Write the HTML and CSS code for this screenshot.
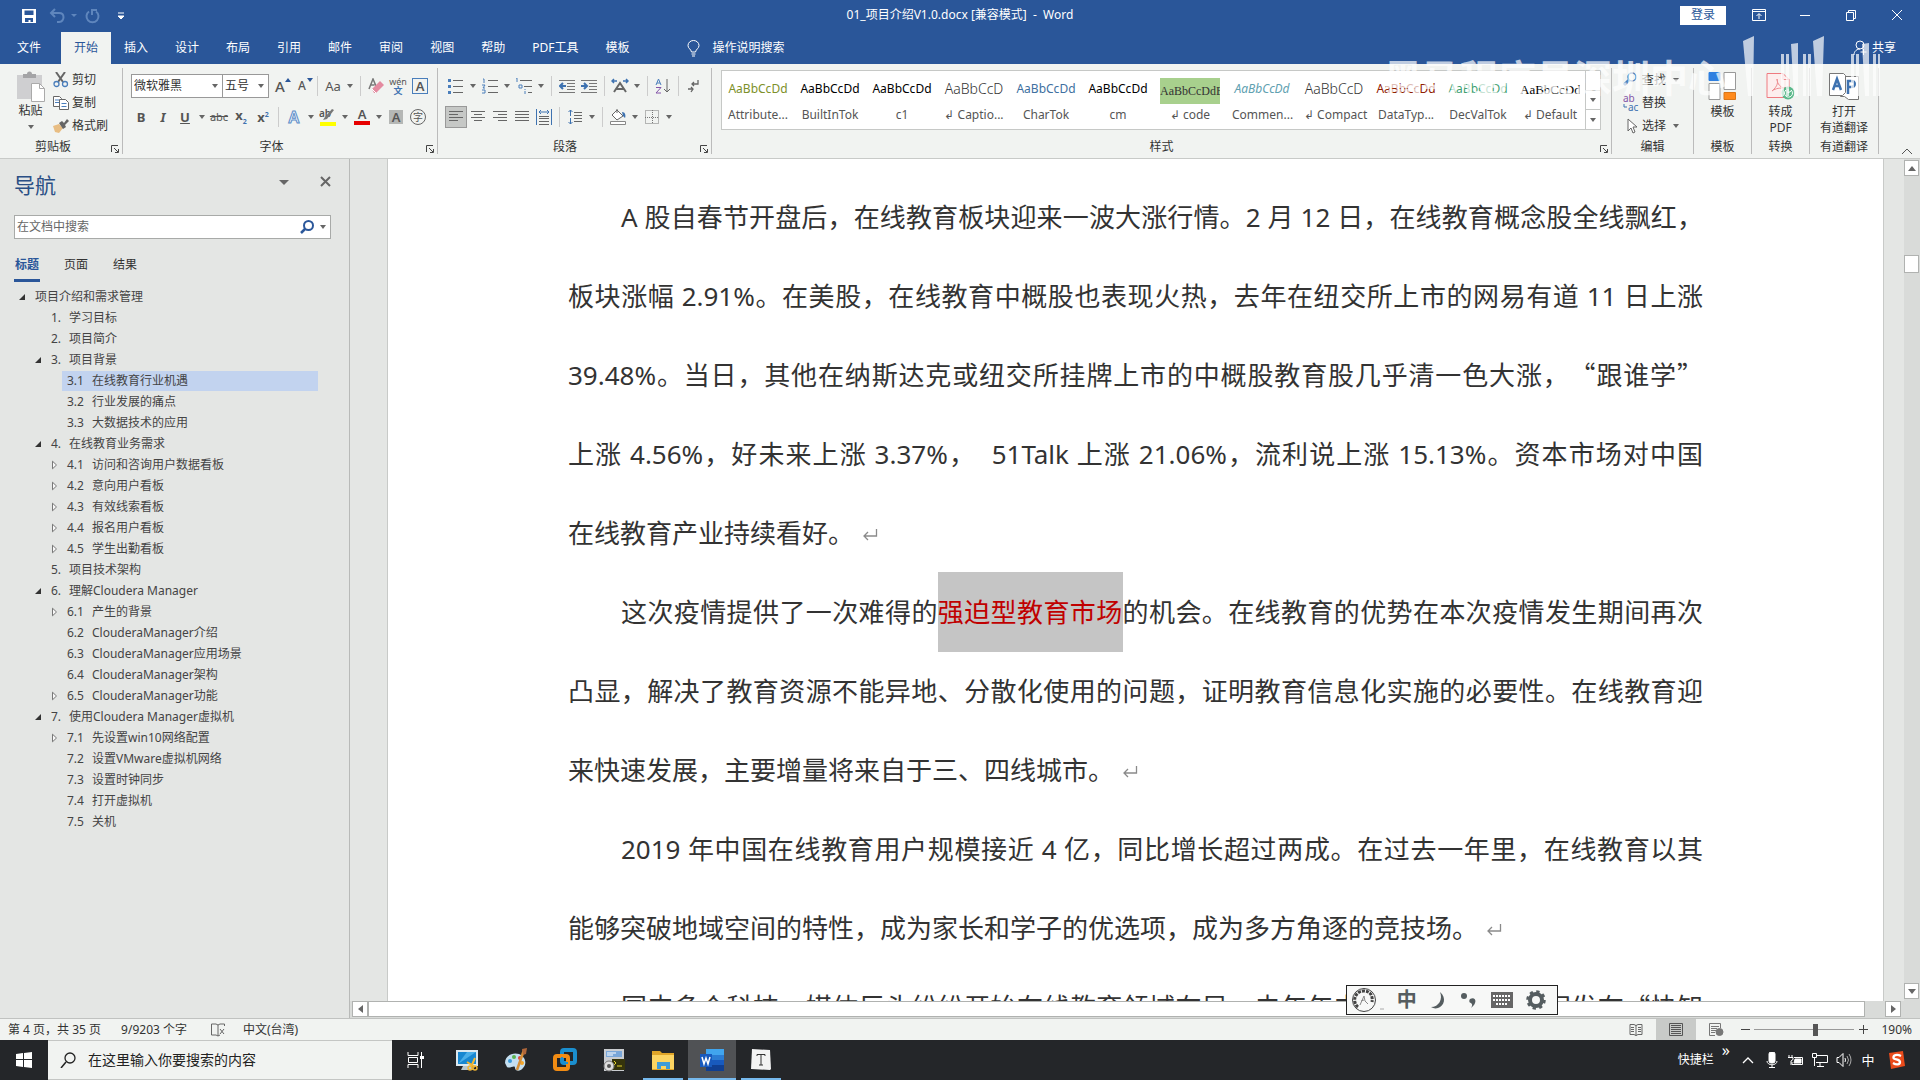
FILE: index.html
```html
<!DOCTYPE html>
<html lang="zh-CN">
<head>
<meta charset="utf-8">
<meta name="viewport" content="width=device-width, initial-scale=1">
<title>01_项目介绍V1.0.docx [兼容模式] - Word</title>
<link rel="stylesheet" href="styles.css">
</head>
<body>
<svg class="defs" aria-hidden="true">
  <symbol id="open" viewBox="0 0 8 8"><path d="M7 1v6H1z" fill="#333"/></symbol>
  <symbol id="closed" viewBox="0 0 8 10"><path d="M1.5 1.2 5.5 5l-4 3.8z" fill="#f8f8f8" stroke="#777"/></symbol>
  <symbol id="launch" viewBox="0 0 9 9"><path d="M.5 7V.5H7M3 3l4 4M7.500 4v3.500H4" fill="none" stroke="#444"/></symbol>
  <symbol id="enter" viewBox="0 0 16 16"><path d="M14.500 2v7H2M6 5 2 9l4 4" fill="none" stroke="#8a8a8a" stroke-width="1.300"/></symbol>
</svg>

<header class="titlebar">
  <div class="quick">
    <button aria-label="保存"><svg width="16" height="16" viewBox="0 0 16 16"><path d="M1 1h14v14H1z" fill="#fff"/><path d="M3.500 2.500h9v4.500h-9zM4 10h8v4H9.500v-2h-2v2H4z" fill="#2a5699"/></svg></button>
    <button class="undo" aria-label="撤消"><svg width="28" height="16" viewBox="0 0 28 16" fill="none" stroke="#5f86bd" stroke-width="2"><path d="M6 1 2 5l4 4M2 5h8c6 0 6 8 0 9H8"/><path d="M22 6h6l-3 3z" fill="#5f86bd" stroke="none"/></svg></button>
    <button aria-label="恢复"><svg width="16" height="16" viewBox="0 0 16 16" fill="none" stroke="#5f86bd" stroke-width="2"><path d="M4 3.500a6 6 0 1 0 7 0M7 7V2h5"/></svg></button>
    <button class="more" aria-label="自定义快速访问工具栏"><svg width="8" height="8" viewBox="0 0 8 8"><path d="M1 1h6M1 4h6L4 7z" stroke="#fff" fill="#fff"/></svg></button>
  </div>
  <h1>01_项目介绍V1.0.docx [兼容模式]&nbsp; -&nbsp; Word</h1>
  <div class="window">
    <button class="login">登录</button>
    <button aria-label="功能区显示选项"><svg width="14" height="12" viewBox="0 0 14 12" fill="none" stroke="#fff"><path d="M.5.5h13v11H.5zM.5 2.500h13M7 10V5M4.500 7 7 4.500 9.500 7"/></svg></button>
    <button aria-label="最小化"><svg width="12" height="12" viewBox="0 0 12 12"><path d="M1 6.500h10" stroke="#fff"/></svg></button>
    <button aria-label="还原"><svg width="12" height="12" viewBox="0 0 12 12" fill="none" stroke="#fff"><path d="M1.500 3.500h7v8h-7zM3.500 3V1.500h7v8H9"/></svg></button>
    <button aria-label="关闭"><svg width="12" height="12" viewBox="0 0 12 12"><path d="m1 1 10 10M11 1 1 11" stroke="#fff"/></svg></button>
  </div>
</header>

<nav class="tabs" aria-label="功能区">
  <button class="file">文件</button><button class="active">开始</button><button>插入</button><button>设计</button><button>布局</button><button>引用</button><button>邮件</button><button>审阅</button><button>视图</button><button>帮助</button><button>PDF工具</button><button>模板</button>
  <button class="tell"><svg width="13" height="17" viewBox="0 0 13 17" fill="none" stroke="#fff"><path d="M4.500 12C4 9 1 8.500 1 5.500a5.500 5 0 0 1 11 0C12 8.500 9 9 8.500 12zM4.500 14h4M5 16h3"/></svg>操作说明搜索</button>
  <button class="share"><svg width="14" height="16" viewBox="0 0 14 16" fill="none" stroke="#fff"><circle cx="7" cy="5" r="4"/><path d="M1 15c0-4 3-6 6-6M10.500 9v6M7.500 12h6"/></svg>共享</button>
</nav>

<section class="ribbon" aria-label="开始">
  <div class="group clip">
    <div class="body">
      <button class="paste"><svg width="29" height="31" viewBox="0 0 29 31"><path d="M1 4h25v24H1z" fill="#cfcfd1"/><path d="M7 7V3h4a2.500 2.500 0 0 1 5 0h4v4z" fill="#a4a4a6"/><path d="M15.500 12.500h8l5 5v13h-13z" fill="#fff" stroke="#aaa"/><path d="M23.500 12.500v5h5" fill="none" stroke="#aaa"/></svg>粘贴<i class="dd"></i></button>
      <div class="stack">
        <button><svg width="16" height="16" viewBox="0 0 16 16" fill="none"><path d="m3 0 7 10M12 0 5 10" stroke="#666" stroke-width="2"/><circle cx="3.500" cy="12" r="2.500" stroke="#4a7ebb" stroke-width="1.300"/><circle cx="12" cy="12" r="2.500" stroke="#4a7ebb" stroke-width="1.300"/></svg>剪切</button>
        <button><svg width="16" height="16" viewBox="0 0 16 16" fill="#fff" stroke="#666"><path d="M.5 1.500h6l2 2v8h-8z"/><path d="M6.500 4.500h6l3 3v7h-9z"/><path d="M2 5h4M2 7.500h4M8.500 8.500h5M8.500 11.500h5" stroke="#4a7ebb"/></svg>复制</button>
        <button><svg width="16" height="16" viewBox="0 0 16 16"><path d="m0 8 6-2 4 4-4 5-4-1z" fill="#e8bd83"/><path d="m6 5 3-2 2 2 3-4 2 2-4 4 1 2-3 2z" fill="#666"/></svg>格式刷</button>
      </div>
    </div>
    <h2>剪贴板</h2><svg class="launch"><use href="#launch"/></svg>
  </div>

  <div class="group font">
    <div class="rows">
      <div class="row">
        <label class="combo wide"><input aria-label="字体" value="微软雅黑"><i class="dd"></i></label><label class="combo"><input aria-label="字号" value="五号"><i class="dd"></i></label>
        <button class="ib" aria-label="增大字号"><span class="big">A</span><svg class="tip" width="6" height="4"><path d="m0 4 3-4 3 4z" fill="#2b579a"/></svg></button>
        <button class="ib" aria-label="减小字号"><span class="mid">A</span><svg class="tip" width="6" height="4"><path d="m0 0 3 4 3-4z" fill="#2b579a"/></svg></button>
        <s></s><button class="ib"><span class="aa">Aa</span><i class="dd"></i></button><s></s>
        <button class="ib" aria-label="清除格式"><svg width="16" height="16" viewBox="0 0 16 16"><path d="m1 11 4-10 3 7M2.500 7h4" stroke="#777" stroke-width="1.500" fill="none"/><path d="m4 11 8-8 4 4-8 8H6z" fill="#e48aa0"/><path d="m4 11 4 4" stroke="#fff"/></svg></button>
        <button class="ib wen" aria-label="拼音指南"><span>wén</span><b>文</b></button>
        <button class="ib" aria-label="字符边框"><span class="boxed">A</span></button>
      </div>
      <div class="row">
        <button class="ib"><b>B</b></button><button class="ib"><b><em>I</em></b></button><button class="ib"><b><u>U</u></b><i class="dd"></i></button><button class="ib"><del>abc</del></button><button class="ib"><b>x<sub>2</sub></b></button><button class="ib"><b>x<sup>2</sup></b></button><s></s>
        <button class="ib"><span class="glow">A</span><i class="dd"></i></button>
        <button class="ib" aria-label="突出显示"><svg width="18" height="18" viewBox="0 0 18 18"><path d="M1 14h16v4H1z" fill="#ff0"/><text x="0" y="9" font-size="10" fill="#555">ab</text><path d="m15 2-7 9-4 1 2-3 7-8z" fill="#777"/></svg><i class="dd"></i></button>
        <button class="ib"><span class="red">A</span><i class="dd"></i></button><button class="ib"><span class="shade">A</span></button><button class="ib"><span class="ring">字</span></button>
      </div>
    </div>
    <h2>字体</h2><svg class="launch"><use href="#launch"/></svg>
  </div>

  <div class="group para">
    <div class="rows">
      <div class="row">
        <button class="ib" aria-label="项目符号"><svg width="16" height="16"><path d="M5 2.500h10M5 8.500h10M5 14.500h10" stroke="#666"/><path d="M0 1h3v3H0zM0 7h3v3H0zM0 13h3v3H0z" fill="#4a7ebb"/></svg><i class="dd"></i></button>
        <button class="ib" aria-label="编号"><svg width="16" height="16"><path d="M6 2.500h10M6 8.500h10M6 14.500h10" stroke="#666"/><path d="M1 1h1v4M0 7h3l-2 3h2M0 12h3v3H0" stroke="#4a7ebb" fill="none"/></svg><i class="dd"></i></button>
        <button class="ib" aria-label="多级列表"><svg width="18" height="16"><path d="M5 2.500h12M9 8.500h8M13 14.500h4" stroke="#666"/><path d="M1 0h1v4M4 7h3v3H4zM10 11v1M10 13v3" stroke="#4a7ebb" fill="none"/></svg><i class="dd"></i></button><s></s>
        <button class="ib" aria-label="减少缩进"><svg width="16" height="14" fill="none"><path d="M0 1.500h16M8 4.500h8M8 7.500h8M8 10.500h8M0 13.500h16" stroke="#777"/><path d="M7 7H1M4 4 1 7l3 3" stroke="#3e72b0" stroke-width="2"/></svg></button>
        <button class="ib" aria-label="增加缩进"><svg width="16" height="14" fill="none"><path d="M0 1.500h16M8 4.500h8M8 7.500h8M8 10.500h8M0 13.500h16" stroke="#777"/><path d="M0 7h6M3 4l3 3-3 3" stroke="#3e72b0" stroke-width="2"/></svg></button><s></s>
        <button class="ib" aria-label="中文版式"><svg width="18" height="16" fill="none"><path d="m3 14 6-9 6 9M5 11h8" stroke="#666" stroke-width="2"/><path d="M1 3h5M3 1 1 3l2 2M12 3h5M15 1l2 2-2 2" stroke="#3e72b0" stroke-width="1.500"/></svg><i class="dd"></i></button><s></s>
        <button class="ib" aria-label="排序"><svg width="16" height="16" fill="none"><path d="m1 7 2.500-6L6 7M2 5h3" stroke="#4a7ebb"/><path d="M1 9.500h5L1 15h5" stroke="#8355a8"/><path d="M12 1v13M9 11l3 3 3-3" stroke="#666"/></svg></button><s></s>
        <button class="ib" aria-label="显示编辑标记"><svg width="14" height="14" fill="none" stroke="#666" stroke-width="1.300"><path d="M11 1v4H5M7 3 5 5l2 2M1 10h5M4 8l2 2-2 3"/></svg></button>
      </div>
      <div class="row">
        <button class="ib on" aria-label="左对齐"><svg width="14" height="14"><path d="M0 1.500h14M0 4.500h9M0 7.500h14M0 10.500h9" stroke="#666"/></svg></button>
        <button class="ib" aria-label="居中"><svg width="14" height="14"><path d="M0 1.500h14M3 4.500h8M0 7.500h14M3 10.500h8" stroke="#666"/></svg></button>
        <button class="ib" aria-label="右对齐"><svg width="14" height="14"><path d="M0 1.500h14M5 4.500h9M0 7.500h14M5 10.500h9" stroke="#666"/></svg></button>
        <button class="ib" aria-label="两端对齐"><svg width="14" height="14"><path d="M0 1.500h14M0 4.500h14M0 7.500h14M0 10.500h14" stroke="#666"/></svg></button>
        <button class="ib" aria-label="分散对齐"><svg width="16" height="16" fill="none"><path d="M.5 0v16M15.500 0v16M3 3h10M5 1 3 3l2 2M11 1l2 2-2 2" stroke="#3e72b0"/><path d="M3 7.500h10M3 9.500h10M3 12.500h10M3 15.500h10" stroke="#666"/></svg></button><s></s>
        <button class="ib" aria-label="行距"><svg width="14" height="16" fill="none"><path d="M6 3.500h8M6 6.500h8M6 9.500h8M6 12.500h8" stroke="#666"/><path d="M2.500 1v6M.5 3l2-2 2 2M2.500 9v6M.5 13l2 2 2-2" stroke="#3e72b0"/></svg><i class="dd"></i></button><s></s>
        <button class="ib" aria-label="底纹"><svg width="17" height="17" fill="none"><path d="M.5 13.500h15v3H.5z" fill="#fff" stroke="#888"/><path d="m7 2 6 6-6 4-5-5zM7 5V1" fill="#fff" stroke="#666"/><path d="M12 4c3 0 4 3 3 6l-2-2z" fill="#3e72b0"/></svg><i class="dd"></i></button>
        <button class="ib" aria-label="边框"><svg width="14" height="14" fill="none" stroke="#777" stroke-dasharray="1 1"><path d="M.5.5h13v13H.5zM7.500 0v14M0 7.500h14"/></svg><i class="dd"></i></button>
      </div>
    </div>
    <h2>段落</h2><svg class="launch"><use href="#launch"/></svg>
  </div>

  <div class="group styles">
    <div class="gallery">
      <div class="cells">
        <button><span class="olive">AaBbCcDd</span>Attribute...</button>
        <button><span>AaBbCcDd</span>BuiltInTok</button>
        <button><span>AaBbCcDd</span>c1</button>
        <button><span class="lite">AaBbCcD</span>↲ Captio...</button>
        <button><span class="blue">AaBbCcDd</span>CharTok</button>
        <button><span>AaBbCcDd</span>cm</button>
        <button><span class="code">AaBbCcDdE</span>↲ code</button>
        <button><span class="comm">AaBbCcDd</span>Commen...</button>
        <button><span class="lite">AaBbCcD</span>↲ Compact</button>
        <button><span class="brown">AaBbCcDd</span>DataTyp...</button>
        <button><span class="green">AaBbCcDd</span>DecValTok</button>
        <button><span class="serif">AaBbCcDd</span>↲ Default</button>
      </div>
      <div class="spin"><button aria-label="上一行"></button><button aria-label="下一行"><i class="dd"></i></button><button class="all" aria-label="其他"><i class="dd"></i></button></div>
    </div>
    <h2>样式</h2><svg class="launch"><use href="#launch"/></svg>
  </div>

  <div class="group edit">
    <div class="stack">
      <button><svg width="16" height="16" fill="none" stroke="#4a7ebb"><circle cx="9" cy="5" r="4" stroke-width="1.500"/><path d="m6 8-5 5" stroke-width="3"/></svg>查找<i class="dd"></i></button>
      <button><svg width="16" height="18"><text x="0" y="8" font-size="10" fill="#8355a8">ab</text><text x="5" y="17" font-size="10" fill="#3e72b0">ac</text><path d="M1 10v3h3" stroke="#3e72b0" fill="none"/></svg>替换</button>
      <button><svg width="16" height="16"><path d="M5 1v12l3-3 2 5 2-1-2-5h4z" fill="#fff" stroke="#666"/></svg>选择<i class="dd"></i></button>
    </div>
    <h2>编辑</h2>
  </div>
  <div class="group tool">
    <button><svg width="29" height="29" fill="#fff" stroke="#999"><path d="M1 .5h11v8H1z" fill="#2f7fe0" stroke="#2f7fe0"/><path d="M16 .5h11.500v17H16zM1 11.500h11v16H1z"/><path d="M16 20.500h11.500v7H16z" fill="#ff8a1c" stroke="#d97618"/></svg>模板</button>
    <h2>模板</h2>
  </div>
  <div class="group tool">
    <button><svg width="29" height="29" fill="none"><path d="M1 1.500h16l6 6v18H1z" fill="#fdeeee" stroke="#ef7a80"/><path d="M17 1.500v6h6M6 19c6-5 6-9 5-12 0 5 4 9 8 9-5 0-9 0-13 3z" stroke="#ee8c90"/><circle cx="22" cy="21" r="6.500" fill="#5bb98b"/><path d="M25 18a4 4 0 1 1-5 0M22 17v4l3-2" stroke="#fff"/></svg>转成<br>PDF</button>
    <h2>转换</h2>
  </div>
  <div class="group tool last">
    <button><svg width="30" height="29" fill="#fff" stroke="#777"><path d="M11.500 4.500h18v23h-10l-4-3h-4z"/><path d="M.5 1.500h14l2 2v17l-3 3H.5z"/><path d="m4 18 4-11 4 11M5.500 14h5M19 22V9h3c5 0 5 6 0 6h-3" fill="none" stroke="#3e72b0" stroke-width="2.500"/></svg>打开<br>有道翻译</button>
    <h2>有道翻译</h2>
  </div>
  <button class="collapse" aria-label="折叠功能区"><svg width="12" height="8"><path d="m1 7 5-5 5 5" stroke="#555" fill="none"/></svg></button>
</section>

<main class="work">
  <aside class="navpane">
    <div class="navhead"><h2>导航</h2><i class="dd"></i><button aria-label="关闭"><svg width="11" height="11"><path d="m1 1 9 9M10 1l-9 9" stroke="#666" stroke-width="2"/></svg></button></div>
    <label class="find"><input type="text" placeholder="在文档中搜索" aria-label="在文档中搜索"><svg width="14" height="14" fill="none" stroke="#2b579a"><circle cx="8.500" cy="5.500" r="4.500" stroke-width="2"/><path d="m5 9-4 4" stroke-width="2.500"/></svg><i class="dd"></i></label>
    <div class="navtabs"><button class="active">标题</button><button>页面</button><button>结果</button></div>
    <ul class="tree">
      <li class="l0"><svg><use href="#open"/></svg><a href="#">项目介绍和需求管理</a></li>
      <li class="l1"><svg></svg><a href="#"><b>1.</b>学习目标</a></li>
      <li class="l1"><svg></svg><a href="#"><b>2.</b>项目简介</a></li>
      <li class="l1"><svg><use href="#open"/></svg><a href="#"><b>3.</b>项目背景</a></li>
      <li class="l2"><svg></svg><a class="current" href="#"><b>3.1</b>在线教育行业机遇</a></li>
      <li class="l2"><svg></svg><a href="#"><b>3.2</b>行业发展的痛点</a></li>
      <li class="l2"><svg></svg><a href="#"><b>3.3</b>大数据技术的应用</a></li>
      <li class="l1"><svg><use href="#open"/></svg><a href="#"><b>4.</b>在线教育业务需求</a></li>
      <li class="l2"><svg><use href="#closed"/></svg><a href="#"><b>4.1</b>访问和咨询用户数据看板</a></li>
      <li class="l2"><svg><use href="#closed"/></svg><a href="#"><b>4.2</b>意向用户看板</a></li>
      <li class="l2"><svg><use href="#closed"/></svg><a href="#"><b>4.3</b>有效线索看板</a></li>
      <li class="l2"><svg><use href="#closed"/></svg><a href="#"><b>4.4</b>报名用户看板</a></li>
      <li class="l2"><svg><use href="#closed"/></svg><a href="#"><b>4.5</b>学生出勤看板</a></li>
      <li class="l1"><svg></svg><a href="#"><b>5.</b>项目技术架构</a></li>
      <li class="l1"><svg><use href="#open"/></svg><a href="#"><b>6.</b>理解Cloudera Manager</a></li>
      <li class="l2"><svg><use href="#closed"/></svg><a href="#"><b>6.1</b>产生的背景</a></li>
      <li class="l2"><svg></svg><a href="#"><b>6.2</b>ClouderaManager介绍</a></li>
      <li class="l2"><svg></svg><a href="#"><b>6.3</b>ClouderaManager应用场景</a></li>
      <li class="l2"><svg></svg><a href="#"><b>6.4</b>ClouderaManager架构</a></li>
      <li class="l2"><svg><use href="#closed"/></svg><a href="#"><b>6.5</b>ClouderaManager功能</a></li>
      <li class="l1"><svg><use href="#open"/></svg><a href="#"><b>7.</b>使用Cloudera Manager虚拟机</a></li>
      <li class="l2"><svg><use href="#closed"/></svg><a href="#"><b>7.1</b>先设置win10网络配置</a></li>
      <li class="l2"><svg></svg><a href="#"><b>7.2</b>设置VMware虚拟机网络</a></li>
      <li class="l2"><svg></svg><a href="#"><b>7.3</b>设置时钟同步</a></li>
      <li class="l2"><svg></svg><a href="#"><b>7.4</b>打开虚拟机</a></li>
      <li class="l2"><svg></svg><a href="#"><b>7.5</b>关机</a></li>
    </ul>
  </aside>

  <div class="canvas">
    <div class="upper">
      <article class="page">
        <div class="flow">
          <p><span class="end">期，情绪影响。</span></p>
          <p><span class="in">A 股自春节开盘后，在线教育板块迎来一波大涨行情。2 月 12 日，在线教育概念股全线飘红，</span><span>板块涨幅 2.91%。在美股，在线教育中概股也表现火热，去年在纽交所上市的网易有道 11 日上涨</span><span>39.48%。当日，其他在纳斯达克或纽交所挂牌上市的中概股教育股几乎清一色大涨，<q>“</q>跟谁学<q>”</q></span><span>上涨 4.56%，好未来上涨 3.37%，&nbsp; 51Talk 上涨 21.06%，流利说上涨 15.13%。资本市场对中国</span><span class="end">在线教育产业持续看好。<svg class="ret"><use href="#enter"/></svg></span></p>
          <p><span class="in">这次疫情提供了一次难得的<mark>强迫型教育市场</mark>的机会。在线教育的优势在本次疫情发生期间再次</span><span>凸显，解决了教育资源不能异地、分散化使用的问题，证明教育信息化实施的必要性。在线教育迎</span><span class="end">来快速发展，主要增量将来自于三、四线城市。<svg class="ret"><use href="#enter"/></svg></span></p>
          <p><span class="in">2019 年中国在线教育用户规模接近 4 亿，同比增长超过两成。在过去一年里，在线教育以其</span><span class="end">能够突破地域空间的特性，成为家长和学子的优选项，成为多方角逐的竞技场。<svg class="ret"><use href="#enter"/></svg></span></p>
          <p><span class="in">国内多个科技、媒体巨头纷纷开始在线教育领域布局，去年年内，阿里巴巴集团间发布<q>“</q>快知</span></p>
        </div>
      </article>
      <div class="vscroll"><button aria-label="向上滚动"><svg width="8" height="5"><path d="m0 5 4-5 4 5z" fill="#666"/></svg></button><i class="thumb"></i><button aria-label="向下滚动"><svg width="8" height="5"><path d="m0 0 4 5 4-5z" fill="#666"/></svg></button></div>
    </div>
    <div class="hscroll"><button aria-label="向左滚动"><svg width="5" height="8"><path d="M5 0 0 4l5 4z" fill="#666"/></svg></button><i class="thumb"></i><button aria-label="向右滚动"><svg width="5" height="8"><path d="m0 0 5 4-5 4z" fill="#666"/></svg></button></div>
    <div class="ime">
      <svg width="32" height="26" viewBox="0 0 32 24" fill="none" stroke="#444"><circle cx="12" cy="12" r="11.500"/><path d="M6 19A9 9 0 0 1 12 3c7 0 9 6 8 11" stroke-width="3" stroke-dasharray="3 1"/><path d="m8 17 4-9 1 5 3 3M12 12l-3 1" stroke="#888"/><path d="M28 21h4" stroke="#aaa"/></svg>
      <b>中</b>
      <svg width="18" height="18"><path d="M10 1c7 6 4 14-2 16-3 1-5 0-7-1 8 0 12-8 9-15z" fill="#555d60"/></svg>
      <svg width="18" height="18" fill="#555d60"><circle cx="4" cy="5" r="3"/><path d="M10 8c6-3 8 4 1 9 2-3 1-4 0-5-2 0-2-3-1-4z"/></svg>
      <svg width="22" height="16"><path d="M0 0h22v16H0z" fill="#666"/><path d="M2 4h18M2 8h18M5 12h12" stroke="#fff" stroke-width="2" stroke-dasharray="2 1"/></svg>
      <svg width="20" height="20" fill="none" stroke="#555d60"><circle cx="10" cy="10" r="6" stroke-width="4"/><circle cx="10" cy="10" r="8.500" stroke-width="2.500" stroke-dasharray="3.300 3.375"/></svg>
    </div>
  </div>
</main>

<footer class="status">
  <span class="pg">第 4 页，共 35 页</span><span class="wc">9/9203 个字</span>
  <svg width="14" height="14" fill="none" stroke="#666"><path d="M7 2v11M7 2 5 1H.5v11H5l2 1M7 2l2-1h4.500v2M9 6l4 5M13 6l-4 5M7 13l2-1"/></svg>
  <span class="lang">中文(台湾)</span>
  <div class="views">
    <button aria-label="阅读视图"><svg width="14" height="12" fill="none" stroke="#666"><path d="M7 1v11M1 .5h4l2 1 2-1h4v10H9l-2 1-2-1H1zM2 3.500h3M2 5.500h3M2 7.500h3M9 3.500h3M9 5.500h3M9 7.500h3"/></svg></button>
    <button class="on" aria-label="页面视图"><svg width="14" height="13" fill="none" stroke="#555"><path d="M.5.5h13v12H.5zM2 2.500h10M2 4.500h10M2 6.500h10M2 8.500h10M2 10.500h10"/></svg></button>
    <button aria-label="Web 版式视图"><svg width="15" height="13" fill="none" stroke="#777"><path d="M6 12.500H.5V.5h11V5M2 3.500h8M2 5.500h6M2 7.500h5M2 9.500h4"/><circle cx="10.500" cy="9" r="3.500" fill="#777"/></svg></button>
    <button class="pm" aria-label="缩小"><svg width="9" height="9"><path d="M0 4.500h9" stroke="#444"/></svg></button>
    <input type="range" min="0" max="100" value="62" aria-label="显示比例">
    <button class="pm" aria-label="放大"><svg width="9" height="9"><path d="M0 4.500h9M4.500 0v9" stroke="#444"/></svg></button>
    <span class="zoom">190%</span>
  </div>
</footer>

<div class="taskbar">
  <button class="start" aria-label="开始菜单"><svg width="16" height="16" fill="#fff"><path d="m0 2 7-1v6H0zM8 1l8-1v7H8zM0 8h7v7l-7-1zM8 8h8v8l-8-1z"/></svg></button>
  <label class="search"><svg width="16" height="16" fill="none" stroke="#222"><circle cx="10" cy="6" r="5" stroke-width="1.300"/><path d="m6 10-5 6" stroke-width="1.500"/></svg><input type="text" placeholder="在这里输入你要搜索的内容" aria-label="搜索"></label>
  <div class="apps">
    <button aria-label="任务视图"><svg width="18" height="16" fill="none" stroke="#fff"><path d="M1 0v3.500h10V0M1.500 5.500h9v5h-9zM1 16v-3.500h10V16M14.500 0v16"/><path d="M13 4h4v3h-4z" fill="#fff" stroke="none"/></svg></button>
    <button aria-label="截图"><svg width="22" height="22"><path d="M0 1h22v16H0z" fill="#dce8ef"/><path d="M2 3h18v12H2z" fill="#1787d1"/><path d="m2 15 9-12h9z" fill="#49aee8"/><path d="M7 17h8l2 4H5z" fill="#b9c6cc"/><path d="m19 9-4 9M11 13l8 5" stroke="#f2b633" stroke-width="2"/><circle cx="14" cy="19" r="2" fill="none" stroke="#f2b633" stroke-width="1.500"/><circle cx="19" cy="19" r="2" fill="none" stroke="#f2b633" stroke-width="1.500"/></svg></button>
    <button aria-label="画图"><svg width="24" height="24"><path d="M1 15C1 8 8 4 15 6c7 3 8 10 4 14-3 4-8 3-8 0 0-4-5 1-8-1z" fill="#c5dff0"/><circle cx="6" cy="13" r="2" fill="#3a9ad9"/><circle cx="10" cy="9" r="2" fill="#5bb450"/><circle cx="16" cy="10" r="2" fill="#e0473e"/><circle cx="18" cy="15" r="2" fill="#f4a62a"/><path d="m20 2-7 20" stroke="#d79038" stroke-width="2.500"/><path d="m18 1 5-1-1 6-3 1z" fill="#b0673a"/></svg></button>
    <button aria-label="VMware"><svg width="24" height="24" fill="none" stroke-width="4"><rect x="9" y="2" width="13" height="13" rx="2" stroke="#1b8fcf"/><rect x="2" y="8" width="13" height="13" rx="2" stroke="#f28c13"/><path d="M9 9v6h6" stroke="#1b8fcf" stroke-width="2"/></svg></button>
    <button aria-label="终端工具"><svg width="23" height="23"><path d="M1 0h20v22H1z" fill="#c9ccd0"/><path d="M3 2h16v6H3z" fill="#7aa7d9"/><path d="M4 4h9M4 6h6" stroke="#fff"/><path d="M9 10h13v11H9z" fill="#35340c"/><path d="m11 12 2 2-2 2M14 17h5" stroke="#e6d32c" fill="none"/><circle cx="6" cy="17" r="5" fill="#ddd" stroke="#777"/><circle cx="6" cy="17" r="2" fill="#555"/></svg></button>
    <button class="open" aria-label="文件资源管理器"><svg width="22" height="20"><path d="M0 1h8l2 2h12v17H0z" fill="#e0a528"/><path d="M0 5h22v14H0z" fill="#fcd462"/><path d="M5 12h13v7h-4v-3H9v3H5z" fill="#3f9bd8"/></svg></button>
    <button class="open active" aria-label="Word"><svg width="24" height="22"><path d="M6 0h18v6H6z" fill="#41a5ee"/><path d="M6 6h18v5H6z" fill="#2b7cd3"/><path d="M6 11h18v5H6z" fill="#185abd"/><path d="M6 16h18v6H6z" fill="#103f91"/><path d="M0 5h12v13H0z" fill="#185abd"/><path d="m2 8 2 7 2-6 2 6 2-7" stroke="#fff" stroke-width="1.500" fill="none"/></svg></button>
    <button class="open" aria-label="Typora"><svg width="22" height="22"><path d="m2 0 18 1 1 19-1 1-19-1z" fill="#f3f3f3"/><path d="M7 7V5.500h8V7M11 5.500V16M9 16h4" stroke="#333" fill="none"/></svg></button>
  </div>
  <div class="tray">
    <span class="quickbar">快捷栏</span><span class="chev">»</span>
    <button aria-label="显示隐藏的图标"><svg width="12" height="8" fill="none" stroke="#fff"><path d="m1 7 5-5 5 5" stroke-width="1.300"/></svg></button>
    <button aria-label="麦克风"><svg width="12" height="16" fill="none" stroke="#fff"><rect x="3" y="0" width="6" height="11" rx="2" fill="#fff"/><path d="M1 9c0 5 10 5 10 0M6 13v3M3 15.500h6"/></svg></button>
    <button aria-label="电池"><svg width="16" height="12" fill="none" stroke="#fff"><path d="M6 3.500h8.500v7H4V8M1 1v2M4 1v2M0 3.500h5v2L3 7v4"/><path d="M7 5h6v4H6z" fill="#fff"/></svg></button>
    <button aria-label="网络"><svg width="16" height="14" fill="none" stroke="#fff"><path d="M4 2.500h11.500v7H4M8 10v3M5 13.500h7M.5.5h4v4h-4zM2.500 5v8"/></svg></button>
    <button aria-label="音量"><svg width="16" height="14" fill="none" stroke="#fff"><path d="M1 4.500h2l4-4v13l-4-4H1zM9 5q1 2 0 4"/><path d="M11 3q3 4 0 8M13 1q4 6 0 12" stroke="#aaa"/></svg></button>
    <button class="zh">中</button>
    <button class="sogou" aria-label="搜狗输入法"><svg width="18" height="18"><path d="m1 2 14-2 2 15-14 3z" fill="#ea4b1b"/><path d="M13 5C9 3 5 4 5.500 7c1 2 6 1 6.500 4 0 3-4 3-7 1" stroke="#fff" stroke-width="2.300" fill="none"/></svg></button>
  </div>
</div>

<div class="watermark" aria-hidden="true"><span>黑马程序员深圳中心</span>
  <svg width="140" height="62" viewBox="0 0 140 62" fill="#fff"><path d="m3 6 11-5-1 60H8zM41 19h3v42h-3zM46 19h3v42h-3zM51 9l7-1v53h-4zM63 19h3v42h-3zM68 19h3v42h-3zM73 6l11-5-2 60h-5zM111 19h3v42h-3zM116 19h3v42h-3zM122 9l7-1v53h-4zM133 19h3v42h-3zM138 19h2v42h-2z"/></svg>
</div>
</body>
</html>
```
FILE: styles.css
```css
* { box-sizing: border-box; }
body {
  margin: 0;
  height: 100vh;
  display: flex;
  flex-direction: column;
  overflow: hidden;
  position: relative;
  font: 12px/16px "Noto Sans", "Noto Sans CJK SC", sans-serif;
  color: #333;
  background: #e4e6e4;
}
button { border: 0; padding: 0; background: none; font: inherit; color: inherit; white-space: nowrap; }
input { font: inherit; color: inherit; min-width: 0; border: 0; padding: 0; background: none; outline: 0; }
h1, h2 { margin: 0; font: inherit; }
a { color: inherit; text-decoration: none; }
svg { flex: none; }
.defs { position: absolute; width: 0; height: 0; }
.dd { display: block; flex: none; border: 3px solid transparent; border-top: 4px solid #666; border-bottom: 0; }

/* title bar */
.titlebar { display: grid; grid-template-columns: 1fr auto 1fr; align-items: center; height: 32px; background: #2a5699; color: #fff; }
.titlebar h1 { line-height: 28px; padding-bottom: 2px; }
.titlebar button { display: flex; align-items: center; justify-content: center; }
.quick { display: flex; align-items: center; padding-left: 21px; gap: 8px; }
.quick .undo { margin-left: 4px; }
.quick .more { margin-left: 8px; }
.window { display: flex; align-items: center; justify-content: flex-end; padding-bottom: 2px; }
.window button { width: 46px; height: 28px; }
.window .login { height: 19px; margin-right: 10px; background: #fff; color: #2a5699; }

/* ribbon tabs */
.tabs { display: flex; height: 32px; padding-left: 5px; gap: 3px; background: #2a5699; color: #fff; }
.tabs button { padding: 0 12px; }
.tabs .file { margin-right: 5px; }
.tabs .active { background: #f1f3f1; color: #2a5699; padding: 0 13px; margin-right: -2px; }
.tabs .tell, .tabs .share { display: flex; align-items: center; gap: 12px; padding: 0; }
.tabs .tell { margin-left: 43px; }
.tabs .share { margin-left: auto; margin-right: 24px; gap: 5px; }

/* ribbon */
.ribbon { display: flex; height: 95px; padding-top: 4px; background: #f1f3f1; border-bottom: 1px solid #c8cac8; position: relative; }
.group { position: relative; flex: none; display: flex; flex-direction: column; justify-content: space-between; height: 86px; border-right: 1px solid #bbb; }
.group h2 { text-align: center; line-height: 14px; }
.launch { position: absolute; right: 2px; bottom: 0; width: 9px; height: 9px; }
.clip { width: 123px; }
.clip h2 { padding-right: 16px; }
.clip .body { display: flex; padding-left: 16px; gap: 8px; }
.paste { display: flex; flex-direction: column; align-items: center; line-height: 18px; padding-top: 3px; }
.paste .dd { margin-top: 5px; }
.stack { display: flex; flex-direction: column; }
.stack button { display: flex; align-items: center; gap: 3px; height: 23px; padding-right: 4px; }
.stack .dd { margin-left: 4px; }
.font { width: 315px; padding-left: 7px; }
.font h2 { padding-right: 24px; }
.para { width: 274px; padding-left: 7px; }
.para h2 { padding-right: 26px; }
.row { display: flex; align-items: center; height: 31px; }
.rows { padding-top: 2px; }
.row s { width: 1px; height: 20px; margin: 0 4px; background: #ccc; }
.combo { display: flex; align-items: center; width: 47px; height: 24px; margin-left: -1px; padding: 0 4px 0 2px; border: 1px solid #999; background: #fff; }
.combo.wide { width: 92px; margin-left: 1px; }
.combo input { flex: 1; width: 0; }
.ib { display: grid; grid-auto-flow: column; grid-template-columns: 22px; justify-items: center; align-items: center; position: relative; min-width: 22px; height: 22px; font-size: 13px; color: #555; }
.ib:has(.dd) { grid-template-columns: 22px 12px; }
.ib.on { background: #c6c8c6; outline: 1px solid #999; outline-offset: -1px; }
.ib svg text { font-weight: 600; }
.ib del { font-size: 11px; }
.ib sub, .ib sup { font-size: 7px; line-height: 8px; color: #3e72b0; }
.big { font-size: 15px; font-weight: 500; }
.mid { font-size: 12px; font-weight: 500; }
.aa { font-size: 13px; }
.tip { position: absolute; right: 0; top: 3px; }
.wen { font-size: 9px; line-height: 9px; grid-auto-flow: row; align-content: center; }
.wen b { font-size: 9px; color: #3e72b0; }
.boxed { width: 16px; height: 16px; line-height: 15px; border: 1px solid #4a7ebb; font-weight: 600; }
.glow { font-size: 16px; font-weight: 600; color: #f4f8ff; -webkit-text-stroke: 1px #5b8cc8; }
.red { width: 16px; line-height: 13px; border-bottom: 4px solid #e60000; font-weight: 600; }
.shade { width: 14px; line-height: 14px; background: #b5b7b5; font-weight: 600; }
.ring { width: 16px; height: 16px; border: 1px solid #666; border-radius: 50%; font-size: 10px; line-height: 14px; }

.styles { flex: 1 1 0; min-width: 0; }
.gallery { display: flex; height: 60px; margin: 2px 10px 0 9px; border: 1px solid #c6c8c6; background: #fff; }
.cells { flex: 1; display: flex; overflow: hidden; }
.cells button { width: 72px; flex: none; display: flex; flex-direction: column; justify-content: flex-start; padding: 7px 6px 0; color: #555; text-align: center; line-height: 16px; }
.cells span { display: block; height: 26px; margin-bottom: 3px; line-height: 22px; overflow: hidden; color: #000; }
.cells .olive { color: #7d9029; }
.cells .blue { color: #4070a0; }
.cells .comm { color: #60a0b0; font-style: italic; }
.cells .brown { color: #902000; }
.cells .green { color: #40a070; }
.cells .lite { font-size: 14px; font-weight: 300; color: #333; }
.cells .code { background: #a8d08d; font-family: "Liberation Serif", serif; line-height: 26px; color: #333; }
.cells .serif { font: 13px/24px "Liberation Serif", serif; }
.spin { width: 15px; display: flex; flex-direction: column; border-left: 1px solid #c6c8c6; }
.spin button { flex: 1; display: grid; place-items: center; border-bottom: 1px solid #c6c8c6; }
.spin .all { border-bottom: 0; }
.spin .all .dd { box-shadow: 0 -6px 0 -3px #666; }
.edit { width: 82px; padding-left: 11px; }
.edit h2 { padding-right: 11px; }
.tool { width: 58px; }
.tool.last { width: 69px; }
.tool button { display: block; line-height: 16px; padding-top: 4px; }
.tool svg { display: block; margin: 0 auto 3px; }
.collapse { margin: auto 7px 3px 22px; line-height: 8px; }

/* work area */
.work { flex: 1; min-height: 0; display: flex; }
.navpane { width: 350px; flex: none; border-right: 1px solid #b8bab8; padding: 10px 18px 0 14px; }
.navhead { display: flex; align-items: center; height: 32px; color: #2a4f85; }
.navhead h2 { flex: 1; font-size: 21px; line-height: 32px; }
.navhead .dd { border-width: 5px 5px 0; margin-right: 31px; margin-bottom: 6px; }
.navhead button { margin-bottom: 6px; line-height: 11px; }
.find { display: flex; align-items: center; height: 24px; margin-top: 14px; padding: 0 4px 0 2px; border: 1px solid #a8aaa8; background: #fff; }
.find input { flex: 1; }
.find .dd { margin-left: 6px; }
::placeholder { color: #666; opacity: 1; }
.navtabs { display: flex; gap: 23px; padding-top: 14px; }
.navtabs button { height: 29px; padding: 0 1px 2px; border-bottom: 3px solid transparent; }
.navtabs .active { color: #2a5699; font-weight: 700; border-color: #2a5699; }
.tree { list-style: none; margin: 4px 0 0; padding: 0; color: #444; }
.tree li { display: flex; align-items: center; height: 21px; }
.tree svg { width: 8px; height: 10px; margin-left: 4px; }
.tree a { flex: 1; margin-right: 13px; padding-left: 9px; line-height: 20px; }
.tree b { display: inline-block; width: 18px; font-weight: 400; }
.tree .l1 { padding-left: 16px; }
.tree .l2 { padding-left: 33px; }
.tree .l2 a { margin-left: 3px; padding-left: 5px; }
.tree .l2 b { width: 25px; }
.tree .current { background: #c2d3ef; }

.canvas { flex: 1; min-width: 0; display: flex; flex-direction: column; position: relative; }
.upper { flex: 1; min-height: 0; display: flex; padding-left: 37px; }
.page { flex: 1; min-width: 0; margin-right: 20px; padding: 0 180px; overflow: hidden; background: #fff; border: solid #c8cac8; border-width: 0 1px; }
.flow { margin-top: -60px; font-size: 26px; line-height: 79px; color: #333; text-spacing-trim: space-all; }
.flow p { margin: 0; }
.flow p span { display: block; height: 79px; text-align: justify; text-align-last: justify; }
.flow p .in { padding-left: 53px; }
.flow p .end { text-align-last: left; }
.flow q { quotes: none; font-family: "Noto Sans CJK SC", sans-serif; line-height: 20px; }
.flow q::before, .flow q::after { content: none; }
.flow mark { padding: 22px 0; background: #c5c5c5; color: #c00000; }
.ret { width: 16px; height: 16px; margin-left: 8px; }
.vscroll { width: 16px; display: flex; flex-direction: column; padding: 1px 0 2px; background: #d9dbd9; }
.vscroll button, .hscroll button { display: grid; place-items: center; width: 15px; height: 16px; background: #fff; border: 1px solid #b0b2b0; }
.vscroll .thumb { height: 18px; margin: 79px 1px auto 0; background: #fff; border: 1px solid #b0b2b0; }
.hscroll { display: flex; height: 17px; padding: 0 19px 1px 2px; background: #d9dbd9; }
.hscroll button { width: 16px; }
.hscroll .thumb { flex: 1; margin-right: 20px; background: #fff; border: 1px solid #b0b2b0; }
.ime { position: absolute; right: 362px; bottom: 3px; width: 212px; height: 30px; display: flex; align-items: center; justify-content: space-between; padding: 0 11px 0 5px; background: #f7f8f7; border: 1px solid #222; }
.ime b { font-size: 20px; line-height: 28px; color: #555d60; }

/* status bar */
.status { display: flex; align-items: center; height: 22px; padding: 0 8px; background: #f1f3f1; border-top: 1px solid #c0c2c0; }
.wc { margin: 0 24px 0 20px; }
.lang { margin-left: 18px; }
.views { margin-left: auto; display: flex; align-items: center; }
.views button { display: grid; place-items: center; width: 40px; height: 21px; }
.views .on { background: #c8cac8; }
.views .pm { width: 18px; }
.views input { appearance: none; width: 100px; height: 1px; margin: 0; background: #999; }
.views input::-webkit-slider-thumb { appearance: none; width: 5px; height: 12px; background: #555; }
.zoom { margin-left: 9px; }

/* task bar */
.taskbar { display: flex; height: 40px; background: #242629; color: #fff; }
.taskbar button { display: grid; place-items: center; }
.start { width: 48px; }
.search { display: flex; align-items: center; width: 344px; padding-left: 12px; gap: 12px; background: #f1f3f1; border: solid #c4c6c4; border-width: 1px 0; font-size: 14px; color: #222; }
.search input { flex: 1; }
.search ::placeholder { color: #222; }
.apps { display: flex; gap: 1px; }
.apps button { width: 48px; }
.apps button:first-child { width: 50px; padding-right: 2px; }
.apps .open { background: linear-gradient(#76b9ed, #76b9ed) center bottom / 40px 2px no-repeat; }
.apps .active { background-color: #505255; background-size: 48px 2px; }
.tray { margin-left: auto; display: flex; align-items: center; padding-right: 6px; }
.tray button { width: 24px; height: 40px; }
.tray .chev { margin: 0 6px 20px 8px; font-size: 16px; }
.tray .zh { font-size: 13px; }
.tray .sogou { width: 34px; }

.watermark { position: absolute; top: 35px; right: 40px; display: flex; align-items: flex-start; gap: 14px; color: #fff; opacity: .7; pointer-events: none; }
.watermark span { font-size: 38px; line-height: 38px; font-weight: 700; padding-top: 23px; }
```
